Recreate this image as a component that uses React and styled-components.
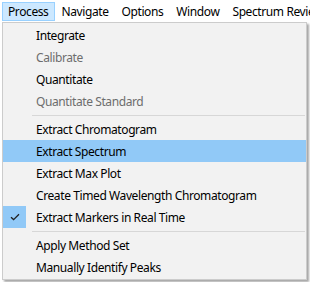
import React from "react";
import styled, { createGlobalStyle } from "styled-components";

const Global = createGlobalStyle`
  html, body { margin: 0; padding: 0; background: #ffffff; }
  body {
    font-family: "Noto Sans", "Segoe UI", sans-serif;
    font-size: 12px;
    letter-spacing: -0.4px;
  }
`;

const Page = styled.div`
  position: relative;
  width: 310px;
  height: 282px;
  overflow: hidden;
  background: #ffffff;
`;

const MenuBar = styled.div`
  display: flex;
  align-items: stretch;
  height: 22px;
  padding: 2px 0 0 2px;
  box-sizing: border-box;
  background: #ffffff;
  overflow: hidden;
`;

const BarItem = styled.div`
  display: flex;
  align-items: center;
  flex-shrink: 0;
  height: 19px;
  padding: 0 6px 0 5px;
  box-sizing: border-box;
  border: 1px solid ${(p) => (p.$active ? "#99d1ff" : "transparent")};
  background: ${(p) => (p.$active ? "#cce8ff" : "transparent")};
  color: #000;
  white-space: nowrap;
`;

const Dropdown = styled.div`
  position: absolute;
  left: 2px;
  top: 22px;
  width: 305px;
  box-sizing: border-box;
  background: #f2f2f2;
  border: 1px solid #cccccc;
  padding: 1px 0 1px 0;
  box-shadow: 2px 2px 2px rgba(0, 0, 0, 0.35);
  display: flex;
  flex-direction: column;
`;

const Item = styled.div`
  position: relative;
  display: flex;
  align-items: center;
  height: 22px;
  padding-left: 33px;
  background: ${(p) => (p.$hover ? "#91c9f7" : "transparent")};
  color: ${(p) => (p.$disabled ? "#6d6d6d" : "#000000")};
  white-space: nowrap;
`;

const CheckBox = styled.div`
  position: absolute;
  left: 0;
  top: 0;
  width: 23px;
  height: 22px;
  background: #91c9f7;
  display: flex;
  align-items: center;
  justify-content: center;
`;

const Separator = styled.div`
  height: 1px;
  margin: 3px 1px 2px 29px;
  background: #d7d7d7;
`;

const Check = () => (
  <svg width="10" height="8" viewBox="0 0 10 8">
    <path d="M1 4.2 L3.6 6.6 L9 1.2" fill="none" stroke="#202020" strokeWidth="1.3" />
  </svg>
);

export default function App() {
  return (
    <Page>
      <Global />
      <MenuBar>
        <BarItem $active>Process</BarItem>
        <BarItem>Navigate</BarItem>
        <BarItem>Options</BarItem>
        <BarItem>Window</BarItem>
        <BarItem>Spectrum Review</BarItem>
      </MenuBar>
      <Dropdown>
        <Item>Integrate</Item>
        <Item $disabled>Calibrate</Item>
        <Item>Quantitate</Item>
        <Item $disabled>Quantitate Standard</Item>
        <Separator />
        <Item>Extract Chromatogram</Item>
        <Item $hover>Extract Spectrum</Item>
        <Item>Extract Max Plot</Item>
        <Item>Create Timed Wavelength Chromatogram</Item>
        <Item>
          <CheckBox>
            <Check />
          </CheckBox>
          Extract Markers in Real Time
        </Item>
        <Separator />
        <Item>Apply Method Set</Item>
        <Item>Manually Identify Peaks</Item>
      </Dropdown>
    </Page>
  );
}
